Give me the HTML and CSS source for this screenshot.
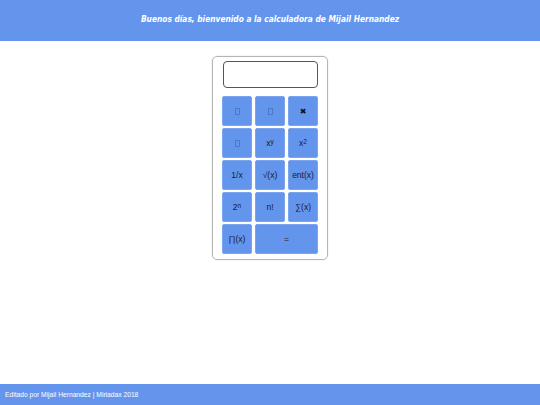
FILE: index.html
```html
<!DOCTYPE html>
<html lang="es">
<head>
<meta charset="utf-8">
<title>Calculadora</title>
<link rel="stylesheet" href="styles.css">
</head>
<body>
<header class="top">
  <h1 class="title">Buenos días, bienvenido a la calculadora de Mijail Hernandez</h1>
</header>
<main class="page">
  <div class="calc">
    <div class="display"></div>
    <div class="keys">
      <button class="key"><span class="tofu"></span></button>
      <button class="key"><span class="tofu"></span></button>
      <button class="key sym">✖</button>
      <button class="key"><span class="tofu"></span></button>
      <button class="key">x<sup>y</sup></button>
      <button class="key">x<sup>2</sup></button>
      <button class="key">1/x</button>
      <button class="key">√(x)</button>
      <button class="key">ent(x)</button>
      <button class="key">2<sup>n</sup></button>
      <button class="key">n!</button>
      <button class="key">∑(x)</button>
      <button class="key">∏(x)</button>
      <button class="key wide">=</button>
    </div>
  </div>
</main>
<footer class="foot">Editado por Mijail Hernandez | Miriadax 2018</footer>
</body>
</html>
```
FILE: styles.css
```css
html, body {
  margin: 0;
  padding: 0;
  height: 100%;
}
body {
  display: flex;
  flex-direction: column;
  min-height: 100vh;
  background: #ffffff;
  font-family: "Liberation Sans", Arial, sans-serif;
}
.top {
  background: #6495ed;
  height: 41px;
  display: flex;
  align-items: center;
  justify-content: center;
}
.title {
  margin: 0;
  color: #ffffff;
  font-family: "DejaVu Sans Condensed", "DejaVu Sans", sans-serif;
  font-style: italic;
  font-weight: bold;
  font-size: 8.3px;
  position: relative;
  top: -2px;
}
.page {
  flex: 1;
  display: flex;
  justify-content: center;
  align-items: flex-start;
  padding-top: 15px;
}
.calc {
  box-sizing: border-box;
  width: 116px;
  border: 1px solid #b5b5b5;
  border-radius: 5px;
  padding: 4px 9px 5px 9px;
  box-shadow: 0 0 2px rgba(0,0,0,0.12);
}
.display {
  box-sizing: border-box;
  width: 95px;
  height: 27px;
  margin-left: 1px;
  border: 1px solid #555555;
  border-radius: 4px;
  background: #ffffff;
}
.keys {
  margin-top: 8px;
  display: grid;
  grid-template-columns: repeat(3, 30px);
  grid-auto-rows: 30px;
  column-gap: 3px;
  row-gap: 2px;
}
.key {
  box-sizing: border-box;
  margin: 0;
  padding: 0;
  background: #6495ed;
  border: 1px solid #7aa4ee;
  border-radius: 2px;
  color: #1a1a2e;
  font-family: "Liberation Sans", Arial, sans-serif;
  font-size: 8.5px;
  display: flex;
  align-items: center;
  justify-content: center;
}
.key sup {
  font-size: 6.5px;
  line-height: 0;
  position: relative;
  top: -1px;
}
.sym {
  font-family: "DejaVu Sans", sans-serif;
  font-size: 8px;
  color: #111111;
}
.wide {
  grid-column: span 2;
}
.tofu {
  display: block;
  width: 3px;
  height: 5px;
  border: 1px solid #4f78c8;
}
.foot {
  background: #6495ed;
  height: 21px;
  display: flex;
  align-items: center;
  padding-left: 5px;
  color: #ffffff;
  font-size: 6.7px;
}
```
